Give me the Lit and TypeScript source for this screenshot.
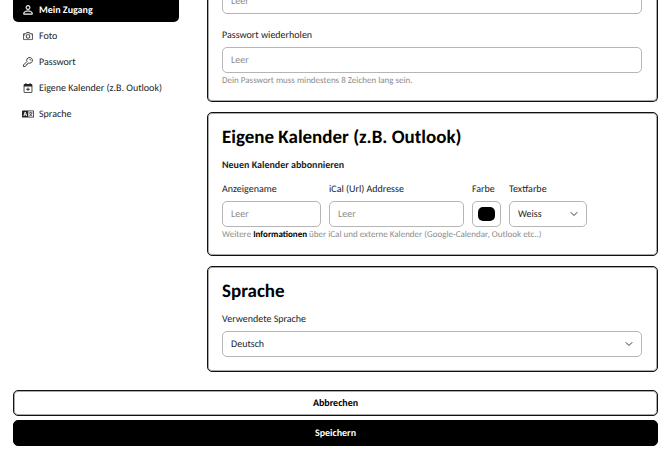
import { LitElement, html, css, svg } from "lit";
import { customElement, property } from "lit/decorators.js";
import { classMap } from "lit/directives/class-map.js";

const icons = {
  person: svg`<path fill="currentColor" stroke="currentColor" stroke-width=".7" d="M8 7.500a3.500 3.500 0 1 0 0-7 3.500 3.500 0 0 0 0 7m2.500-3.500a2.500 2.500 0 1 1-5 0 2.500 2.500 0 0 1 5 0m5 10c0 1-1 1.200-1 1.200H1.500s-1-.2-1-1.200 1-5 7.500-5 7.500 4 7.500 5m-1.100 0c0-.3-.2-1.200-1-2C12.700 11.200 11 10 8 10s-4.700 1.200-5.400 2c-.8.8-1 1.700-1 2z"/>`,
  camera: svg`<path fill="currentColor" stroke="currentColor" stroke-width=".3" d="M15 12a1 1 0 0 1-1 1H2a1 1 0 0 1-1-1V6a1 1 0 0 1 1-1h1.172a3 3 0 0 0 2.120-.879l.83-.828A1 1 0 0 1 6.827 3h2.344a1 1 0 0 1 .707.293l.828.828A3 3 0 0 0 12.828 5H14a1 1 0 0 1 1 1zM2 4a2 2 0 0 0-2 2v6a2 2 0 0 0 2 2h12a2 2 0 0 0 2-2V6a2 2 0 0 0-2-2h-1.172a2 2 0 0 1-1.414-.586l-.828-.828A2 2 0 0 0 9.172 2H6.828a2 2 0 0 0-1.414.586l-.828.828A2 2 0 0 1 3.172 4z"/><path fill="currentColor" stroke="currentColor" stroke-width=".3" d="M8 11a2.500 2.500 0 1 1 0-5 2.500 2.500 0 0 1 0 5m0 1a3.500 3.500 0 1 0 0-7 3.500 3.500 0 0 0 0 7M3 6.500a.5.5 0 1 1-1 0 .5.5 0 0 1 1 0"/>`,
  key: svg`<g fill="none" stroke="currentColor" stroke-width="1.400" stroke-linejoin="round"><path d="M6.300 7.200A4.600 4.600 0 1 1 9 9.700L7.400 10.400 6.900 12 5.200 12.300 4.800 14 3.600 15.300H.8V12.700Z"/><path d="M10.400 3.400Q12.300 3.700 12.700 5.600"/></g>`,
  calendar: svg`<path fill="currentColor" fill-rule="evenodd" d="M4 0h1.500v1.500h5V0H12v1.500h1.500a1.500 1.500 0 0 1 1.500 1.500v11a1.500 1.500 0 0 1-1.500 1.500h-11A1.500 1.500 0 0 1 1 14V3a1.500 1.500 0 0 1 1.500-1.500H4zM2.300 5.500v8.700h11.400V5.500zM7.300 7.200h1.400v2h2v1.400h-2v2H7.300v-2h-2V9.200h2z"/>`,
  language: svg`<path fill="currentColor" fill-rule="evenodd" d="M1.500 2h17A1.500 1.500 0 0 1 20 3.500v9a1.500 1.500 0 0 1-1.500 1.500h-17A1.500 1.500 0 0 1 0 12.500v-9A1.500 1.500 0 0 1 1.500 2M10.500 3.300v9.400h8.200V3.300zM4.500 4.500h1.800l2.200 7H7L6.600 10H4.200l-.4 1.500H2.300zM5.400 6.200 4.600 8.800h1.600z"/><path fill="none" stroke="currentColor" stroke-width="1.200" d="M14.600 4.300v1.800M11.600 6.100h6M16.600 6.300q-1 3.700-4.600 5M12.700 7.500q1.400 2.900 4.500 3.800"/>`,
};

type IconName = keyof typeof icons;

@customElement("nav-icon")
class NavIcon extends LitElement {
  @property() name: IconName = "person";

  static styles = css`
    :host { display: flex; flex: none; justify-content: center; width: 12px; }
    .icon { flex: none; width: 10px; height: 10px; }
    .wide { width: 12px; }
  `;

  render() {
    const wide = this.name === "language";
    return html`<svg class=${classMap({ icon: true, wide })} viewBox=${wide ? "0 0 20 16" : "0 0 16 16"} aria-hidden="true">${icons[this.name]}</svg>`;
  }
}

const entries: { icon: IconName; label: string; active?: boolean }[] = [
  { icon: "person", label: "Mein Zugang", active: true },
  { icon: "camera", label: "Foto" },
  { icon: "key", label: "Passwort" },
  { icon: "calendar", label: "Eigene Kalender (z.B. Outlook)" },
  { icon: "language", label: "Sprache" },
];

@customElement("app-root")
class AppRoot extends LitElement {
  static styles = css`
    :host {
      display: block;
      overflow: hidden;
      background: #fff;
      color: #212529;
      font: 10px/14px Carlito, Lato, sans-serif;
      text-rendering: geometricPrecision;
    }
    * { box-sizing: border-box; }
    .layout {
      display: grid;
      grid-template-columns: 166px minmax(0, 1fr);
      gap: 28px;
      margin: -12px 12px 0 13px;
      align-items: start;
    }
    .nav { display: flex; flex-direction: column; padding-top: 8px; }
    .entry {
      display: flex;
      align-items: center;
      gap: 5px;
      height: 26px;
      padding: 1px 9px 0;
      border-radius: 5px;
      color: inherit;
      text-decoration: none;
      white-space: nowrap;
    }
    .active { background: #000; color: #fff; font-weight: 700; }
    .cards { display: flex; flex-direction: column; gap: 10px; }
    .card {
      border: 1px solid #111;
      border-radius: 5px;
      box-shadow: inset 0 0 0 1px #aaa;
      padding: 14px 15px 14px 14px;
    }
    .open { border-top: 0; border-radius: 0 0 5px 5px; padding-top: 0; }
    .title { margin: 0 0 9px; font-size: 19px; line-height: 22px; font-weight: 700; color: #000; }
    .subtitle { margin: 0 0 10px; font-size: 10px; line-height: 14px; font-weight: 700; }
    .field { display: flex; flex-direction: column; gap: 5px; min-width: 0; }
    .spaced { margin-top: 14px; }
    .control {
      width: 100%;
      height: 26px;
      margin: 0;
      padding: 0 8px;
      border: 1px solid #b5b5b5;
      border-radius: 5px;
      background: #fff;
      color: inherit;
      font: inherit;
      text-rendering: inherit;
      appearance: none;
    }
    .text { padding-bottom: 2px; }
    .control::placeholder { color: #8c8c8c; opacity: 1; }
    .hint { margin: 2px 0 0; font-size: 9px; line-height: 12px; color: #8c8c8c; }
    .link { color: #000; font-weight: 700; text-decoration: none; }
    .row {
      display: grid;
      grid-template-columns: 99fr 135fr 29px 78fr 47fr;
      gap: 8px;
    }
    .color { padding: 5px; }
    .color::-webkit-color-swatch-wrapper { padding: 0; }
    .color::-webkit-color-swatch { border: 0; border-radius: 5px; }
    .choice { display: grid; align-items: center; }
    .choice > * { grid-area: 1 / 1; }
    .chevron { justify-self: end; width: 8px; height: 8px; margin-right: 9px; pointer-events: none; }
    .actions { display: flex; flex-direction: column; gap: 4px; margin: 18px 12px 12px 13px; }
    .button {
      height: 26px;
      padding: 0;
      border: 1px solid #111;
      border-radius: 5px;
      box-shadow: inset 0 0 0 1px #aaa;
      background: #fff;
      color: #000;
      font: inherit;
      font-weight: 700;
      text-rendering: inherit;
    }
    .primary { background: #000; border-color: #000; box-shadow: none; color: #fff; }
  `;

  private chevron() {
    return html`<svg class="chevron" viewBox="0 0 16 16" aria-hidden="true"><path d="M2 5l6 6 6-6" fill="none" stroke="#343a40" stroke-width="2" stroke-linecap="round" stroke-linejoin="round" /></svg>`;
  }

  render() {
    return html`
      <div class="layout">
        <nav class="nav">
          ${entries.map(
            (e) => html`<a href="#" class=${classMap({ entry: true, active: !!e.active })}><nav-icon name=${e.icon}></nav-icon><span>${e.label}</span></a>`,
          )}
        </nav>
        <main class="cards">
          <section class="card open">
            <input class="control text" type="password" placeholder="Leer" aria-label="Passwort" />
            <div class="field spaced">
              <label for="repeat">Passwort wiederholen</label>
              <input class="control text" id="repeat" type="password" placeholder="Leer" />
            </div>
            <p class="hint">Dein Passwort muss mindestens 8 Zeichen lang sein.</p>
          </section>
          <section class="card">
            <h2 class="title">Eigene Kalender (z.B. Outlook)</h2>
            <h3 class="subtitle">Neuen Kalender abbonnieren</h3>
            <div class="row">
              <div class="field">
                <label for="name">Anzeigename</label>
                <input class="control text" id="name" type="text" placeholder="Leer" />
              </div>
              <div class="field">
                <label for="url">iCal (Url) Addresse</label>
                <input class="control text" id="url" type="url" placeholder="Leer" />
              </div>
              <div class="field">
                <label for="color">Farbe</label>
                <input class="control color" id="color" type="color" value="#000000" />
              </div>
              <div class="field">
                <label for="text-color">Textfarbe</label>
                <div class="choice">
                  <select class="control" id="text-color"><option>Weiss</option><option>Schwarz</option></select>
                  ${this.chevron()}
                </div>
              </div>
            </div>
            <p class="hint">Weitere <a class="link" href="#">Informationen</a> über iCal und externe Kalender (Google-Calendar, Outlook etc..)</p>
          </section>
          <section class="card">
            <h2 class="title">Sprache</h2>
            <div class="field">
              <label for="language">Verwendete Sprache</label>
              <div class="choice">
                <select class="control" id="language"><option>Deutsch</option><option>English</option></select>
                ${this.chevron()}
              </div>
            </div>
          </section>
        </main>
      </div>
      <div class="actions">
        <button class="button" type="button">Abbrechen</button>
        <button class="button primary" type="submit">Speichern</button>
      </div>
    `;
  }
}
